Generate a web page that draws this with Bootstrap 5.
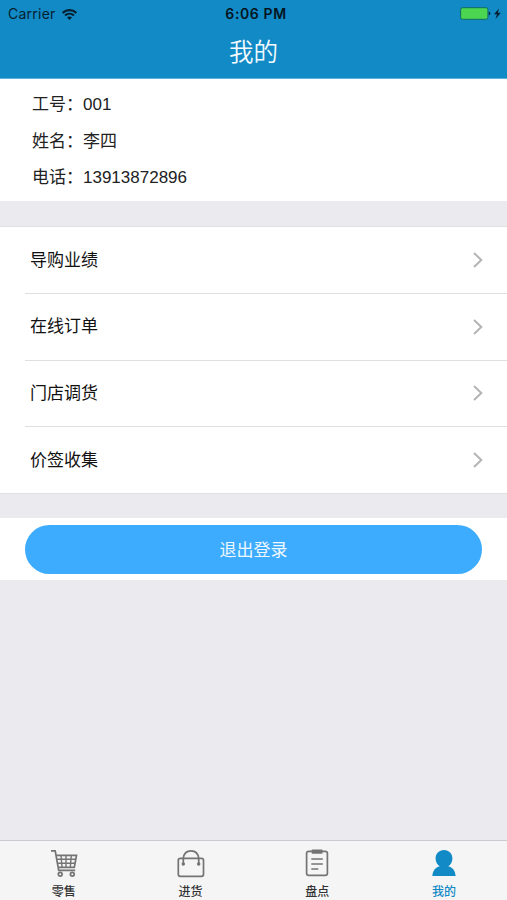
<!DOCTYPE html>
<html lang="zh-CN">
<head>
<meta charset="utf-8">
<meta name="viewport" content="width=device-width, initial-scale=1">
<title>我的</title>
<link href="https://cdn.jsdelivr.net/npm/bootstrap@5.3.0/dist/css/bootstrap.min.css" rel="stylesheet">
<style>
body { background: #eaeaef; color: #222; font-family: "Liberation Sans", "Noto Sans CJK SC", sans-serif; font-size: 17px; }
svg { display: block; flex: none; }
.app-header { background: #128ac6; height: 79px; border-bottom: 1px solid #5db3dc; }
.status-bar { height: 28px; padding: 0 5px 0 8px; color: #06202f; font: 14px/28px Inter, sans-serif; }
.status-bar .side { flex: 1 1 0; }
.carrier { letter-spacing: .25px; width: 54px; }
.status-time { color: #04141e; font-weight: 600; letter-spacing: .6px; margin-left: 2px; }
.app-title { font-size: 24.5px; font-weight: 350; line-height: 50px; color: #f4fbff; }
.profile { height: 122px; padding: 8px 32px 0; }
.profile-row { height: 36.7px; line-height: 36px; }
.profile-label { width: 51px; }
.menu-list { height: 268px; margin-top: 25px; border-top: 1px solid #e0e0e4; border-bottom: 1px solid #e0e0e4; padding-left: 25px; }
.menu-row { flex: 1 1 0; padding: 0 24.5px 0 5px; color: #111; }
.menu-row span { padding-top: 1px; }
.menu-row + .menu-row { border-top: 1px solid #dfdfe1; }
.logout { height: 62px; margin-top: 24px; padding: 7px 25px 6px; }
.logout-btn { --bs-btn-bg: #3eacfe; --bs-btn-color: #eef8ff; --bs-btn-hover-bg: #2f9ff2; --bs-btn-hover-color: #fff; --bs-btn-padding-y: 0; font-size: 17px; border: 0; padding-top: 2px; }
.tab-bar { height: 60px; background: #f5f5f6; border-top: 1px solid #cbcbd1; }
.tab-item { flex: 1 1 0; padding: 8px 0 0 1px; color: #333; font-size: 12px; font-weight: 500; line-height: 17px; gap: 6px; }
.tab-item svg { color: #747474; }
.tab-item.current, .tab-item.current svg { color: #128ac6; }
</style>
</head>
<body>
<div class="d-flex flex-column vh-100 overflow-hidden">
  <header class="app-header">
    <div class="status-bar d-flex align-items-center">
      <div class="side d-flex align-items-center">
        <span class="carrier">Carrier</span>
        <svg width="15" height="11" viewBox="0 0 15 11" fill="none" stroke="currentColor" stroke-width="2.100"><path d="M.7 3.900c3.800-3.700 9.800-3.700 13.600 0M3 6.600c2.600-2.400 6.400-2.400 9 0"/><path d="M7.500 11 5 8.500c1.500-1.300 3.500-1.300 5 0z" fill="currentColor" stroke="none"/></svg>
      </div>
      <span class="status-time">6:06 PM</span>
      <div class="side d-flex justify-content-end align-items-center">
        <svg width="42" height="14" viewBox="0 0 42 14"><rect x=".6" y=".7" width="27.300" height="11.600" rx="2" fill="#4bd551" stroke="#126b63"/><path d="M28.800 4.600q3.200 2 0 4z" fill="#06202f"/><path d="m39 1.500-5 5.800h3L35.500 12l5.300-6.300h-3z" fill="#06202f"/></svg>
      </div>
    </div>
    <h1 class="app-title text-center m-0">我的</h1>
  </header>
  <main class="flex-grow-1">
    <section class="profile bg-white">
      <div class="profile-row d-flex"><span class="profile-label">工号：</span><span>001</span></div>
      <div class="profile-row d-flex"><span class="profile-label">姓名：</span><span>李四</span></div>
      <div class="profile-row d-flex"><span class="profile-label">电话：</span><span>13913872896</span></div>
    </section>
    <nav class="menu-list bg-white d-flex flex-column">
      <a href="#" class="menu-row d-flex align-items-center justify-content-between text-decoration-none"><span>导购业绩</span><svg width="10" height="16" viewBox="0 0 10 16" fill="none" stroke="#b4b4b6" stroke-width="2"><path d="m1 1 7.300 7L1 15"/></svg></a>
      <a href="#" class="menu-row d-flex align-items-center justify-content-between text-decoration-none"><span>在线订单</span><svg width="10" height="16" viewBox="0 0 10 16" fill="none" stroke="#b4b4b6" stroke-width="2"><path d="m1 1 7.300 7L1 15"/></svg></a>
      <a href="#" class="menu-row d-flex align-items-center justify-content-between text-decoration-none"><span>门店调货</span><svg width="10" height="16" viewBox="0 0 10 16" fill="none" stroke="#b4b4b6" stroke-width="2"><path d="m1 1 7.300 7L1 15"/></svg></a>
      <a href="#" class="menu-row d-flex align-items-center justify-content-between text-decoration-none"><span>价签收集</span><svg width="10" height="16" viewBox="0 0 10 16" fill="none" stroke="#b4b4b6" stroke-width="2"><path d="m1 1 7.300 7L1 15"/></svg></a>
    </nav>
    <section class="logout bg-white">
      <button type="button" class="btn logout-btn rounded-pill w-100 h-100">退出登录</button>
    </section>
  </main>
  <nav class="tab-bar d-flex">
    <a href="#" class="tab-item d-flex flex-column align-items-center text-decoration-none">
      <svg width="28" height="29" viewBox="0 0 28 29" fill="none" stroke="currentColor" stroke-width="1.700"><path d="M1 1.800h4.200l3.500 19.500h16.500M6 6.300h20.500l-2.200 12H8.200"/><path d="M7 10.300h18.700M7.600 14.300h17.500M11 6.300l1 12M16 6.300v12M21.300 6.300l-1 12" stroke-width="1.400"/><circle cx="10.200" cy="25.300" r="1.900"/><circle cx="22.300" cy="25.300" r="1.900"/></svg>
      <span>零售</span>
    </a>
    <a href="#" class="tab-item d-flex flex-column align-items-center text-decoration-none">
      <svg width="28" height="29" viewBox="0 0 28 29" fill="none" stroke="currentColor" stroke-width="1.700"><rect x="1.300" y="9.300" width="25.200" height="18" rx="2"/><path d="M6.300 15V9.400C6.800 4.600 9.600 1.800 14 1.800s7.200 2.800 7.700 7.600V15"/><circle cx="6.300" cy="15" r=".9" fill="currentColor"/><circle cx="21.700" cy="15" r=".9" fill="currentColor"/></svg>
      <span>进货</span>
    </a>
    <a href="#" class="tab-item d-flex flex-column align-items-center text-decoration-none">
      <svg width="28" height="29" viewBox="0 0 28 29" fill="none" stroke="currentColor" stroke-width="1.700"><rect x="3.600" y="2.400" width="20.800" height="24" rx="2.200"/><rect x="8.600" y=".6" width="11" height="4.200" rx="1" fill="currentColor" stroke="none"/><path d="M8.300 10h11.500M8.300 15h11.500M8.300 20h7"/></svg>
      <span>盘点</span>
    </a>
    <a href="#" class="tab-item current d-flex flex-column align-items-center text-decoration-none">
      <svg width="28" height="29" viewBox="0 0 28 29" fill="currentColor"><path d="M14 1c-5 0-8.400 3.700-8.400 8.400 0 3.400 1.600 6.200 4.200 7.800-4.400 1.200-7.200 4.500-7.400 9.900h23.200c-.2-5.400-3-8.700-7.400-9.900 2.600-1.600 4.200-4.400 4.200-7.800C22.400 4.700 19 1 14 1z"/></svg>
      <span>我的</span>
    </a>
  </nav>
</div>
<script src="https://cdn.jsdelivr.net/npm/bootstrap@5.3.0/dist/js/bootstrap.bundle.min.js"></script>
</body>
</html>
